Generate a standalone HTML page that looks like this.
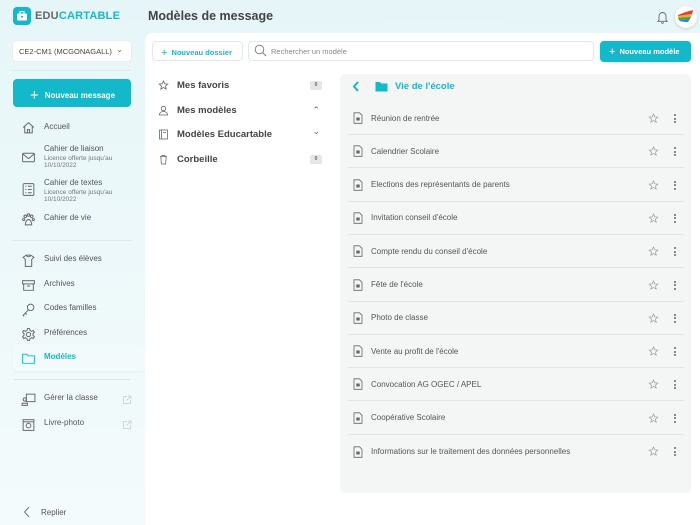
<!DOCTYPE html>
<html><head><meta charset="utf-8"><style>
*{margin:0;padding:0;box-sizing:border-box}
body{width:700px;height:525px;overflow:hidden;font-family:"Liberation Sans",sans-serif;background:linear-gradient(180deg,#e6f6f8 0%,#f4fbfc 100%);position:relative;color:#555}
.a{position:absolute}
.nav{position:absolute;left:21px;font-size:8px;color:#555;display:flex;align-items:flex-start}
.nav svg{width:15px;height:15px;margin-right:8px;flex:none}
.nav small{display:block;font-size:6.5px;color:#777;line-height:7px;margin-top:2px}
.row{position:absolute;left:348px;width:336px;height:33px;border-bottom:1px solid #e1e4e4;font-size:8px;color:#555;display:flex;align-items:center}
.row.last{border-bottom:none}
.row .ic{margin-left:5px;margin-right:8px}
.row .st{position:absolute;right:25px;top:11px}
.row .dt{position:absolute;right:8px;top:12px;width:2px}
.dt i{display:block;width:2px;height:2px;background:#666;border-radius:1px;margin-bottom:1.5px}
.cat{position:absolute;left:158px;font-size:9.5px;font-weight:bold;color:#444;display:flex;align-items:center;width:164px}
.cat svg{margin-right:8px}
.badge{position:absolute;right:0;width:12px;height:9px;background:#e6e6e6;border-radius:2px;font-size:5px;text-align:center;line-height:9px;color:#666}
</style></head><body>
<div class="a" style="left:13px;top:7px;width:18px;height:18px;background:#14b8cb;border-radius:4px"></div>
<svg class="a" style="left:16px;top:10px" width="12" height="12" viewBox="0 0 12 12"><rect x="1" y="3.5" width="10" height="7" rx="1" fill="#fff"/><rect x="4" y="1.5" width="4" height="2.5" fill="none" stroke="#fff" stroke-width="1"/><rect x="5" y="6" width="2" height="1.5" fill="#14b8cb"/></svg>
<div class="a" style="left:35px;top:10px;font-size:11px;font-weight:bold;letter-spacing:0.2px"><span style="color:#666">EDU</span><span style="color:#14b8cb">CARTABLE</span></div>
<div class="a" style="left:148px;top:9px;font-size:12.5px;font-weight:bold;color:#444">Modèles de message</div>
<svg class="a" style="left:656px;top:10px" width="13" height="14" viewBox="0 0 13 14"><path d="M3 10V6a3.5 3.5 0 0 1 7 0v4l1.2 1.3H1.8z M5.5 12.3a1 1 0 0 0 2 0" fill="none" stroke="#666" stroke-width="0.9"/></svg>
<div class="a" style="left:675px;top:6px;width:22px;height:22px;border-radius:50%;background:#fff;box-shadow:0 1px 3px rgba(0,0,0,.15);overflow:hidden">
<svg width="22" height="22" viewBox="0 0 22 22"><path d="M3 9 Q10 6 18 4 L17 8 Q10 9 3 10z" fill="#e53935"/><path d="M3 10 Q10 9 17 8 L16 11 Q10 11 3 12z" fill="#f9a825"/><path d="M3 12 Q10 11 16 11 L15 13 Q9 14 4 14z" fill="#43a047"/><path d="M4 14 Q9 14 15 13 L13 16 Q8 16 5 15z" fill="#1e88e5"/></svg></div>
<div class="a" style="left:13px;top:41px;width:118px;height:20px;background:#fff;border-radius:4px;box-shadow:0 0 0 1px #e6eeee;font-size:7.5px;color:#444;padding:6px 0 0 6px">CE2-CM1 (MCGONAGALL)<span style="position:absolute;right:8px;top:4px;font-size:8px;color:#666">&#8964;</span></div>
<div class="a" style="left:13px;top:70px;width:118px;height:1px;background:#dfe9ea"></div>
<div class="a" style="left:13px;top:79px;width:118px;height:28px;background:#14b8cb;border-radius:4px;color:#fff;font-size:8px;font-weight:bold;padding:8px 0 0 17px"><span style="font-size:15px;font-weight:normal;vertical-align:-2px;margin-right:6px">+</span>Nouveau message</div>
<div class="nav" style="top:120px"><svg viewBox="0 0 14 14" fill="none" stroke="#666" stroke-width="0.9"><path d="M2 7L7 2.5 12 7M3.5 6v6h7V6M6 12V9h2v3"/></svg><span style="margin-top:2px">Accueil</span></div>
<div class="nav" style="top:144px"><svg viewBox="0 0 14 14" fill="none" stroke="#666" stroke-width="0.9" style="margin-top:6px"><rect x="1.5" y="3" width="11" height="8" rx="1"/><path d="M1.5 3.5L7 8l5.5-4.5"/></svg><div>Cahier de liaison<small>Licence offerte jusqu'au<br>10/10/2022</small></div></div>
<div class="nav" style="top:178px"><svg viewBox="0 0 14 14" fill="none" stroke="#666" stroke-width="0.9" style="margin-top:4px"><rect x="2" y="1.5" width="10" height="11" rx="1"/><path d="M4 4h1M6.5 4h3.5M4 7h1M6.5 7h3.5M4 10h1M6.5 10h3.5"/></svg><div>Cahier de textes<small>Licence offerte jusqu'au<br>10/10/2022</small></div></div>
<div class="nav" style="top:212px"><svg viewBox="0 0 14 14" fill="none" stroke="#666" stroke-width="0.9"><circle cx="4" cy="4" r="1.2"/><circle cx="7" cy="2.8" r="1.2"/><circle cx="10" cy="4" r="1.2"/><circle cx="2.5" cy="7" r="1"/><circle cx="11.5" cy="7" r="1"/><path d="M4 12c0-3 1.5-5 3-5s3 2 3 5z"/></svg><span style="margin-top:1px">Cahier de vie</span></div>
<div class="a" style="left:13px;top:240px;width:118px;height:1px;background:#dfe9ea"></div>
<div class="nav" style="top:253px"><svg viewBox="0 0 14 14" fill="none" stroke="#666" stroke-width="0.9"><path d="M5 2h4l3 2-2 2v6.5H4V6L2 4z M5 2a2 1.5 0 0 0 4 0"/></svg><span style="margin-top:1px">Suivi des élèves</span></div>
<div class="nav" style="top:278px"><svg viewBox="0 0 14 14" fill="none" stroke="#666" stroke-width="0.9"><rect x="1.5" y="2.5" width="11" height="3"/><path d="M2.5 5.5v6h9v-6M5.5 7.5h3"/></svg><span style="margin-top:1px">Archives</span></div>
<div class="nav" style="top:302px"><svg viewBox="0 0 14 14" fill="none" stroke="#666" stroke-width="0.9"><circle cx="9" cy="5" r="3"/><path d="M7 7.2L2 12.5l1 1M4 10.5l1.5 1.2"/></svg><span style="margin-top:1px">Codes familles</span></div>
<div class="nav" style="top:327px"><svg viewBox="0 0 14 14" fill="none" stroke="#666" stroke-width="0.9"><circle cx="7" cy="7" r="2"/><path d="M6 1.5h2l.4 1.7 1.5.8 1.6-.7 1 1.7-1.3 1.2v1.6l1.3 1.2-1 1.7-1.6-.7-1.5.8L8 12.5H6l-.4-1.7-1.5-.8-1.6.7-1-1.7L2.8 7.8V6.2L1.5 5l1-1.7 1.6.7 1.5-.8z"/></svg><span style="margin-top:1px">Préférences</span></div>
<div class="a" style="left:13px;top:345px;width:132px;height:26px;background:#f2fafb;border-radius:4px;box-shadow:0 1px 2px rgba(0,0,0,.05)"></div>
<div class="nav" style="top:351px;color:#14b8cb;font-weight:bold"><svg viewBox="0 0 14 14" fill="none" stroke="#14b8cb" stroke-width="0.9"><path d="M1.5 3h4l1 1.5h6v7h-11z"/></svg><span style="margin-top:1px">Modèles</span></div>
<div class="a" style="left:13px;top:379px;width:118px;height:1px;background:#dfe9ea"></div>
<div class="nav" style="top:392px"><svg viewBox="0 0 14 14" fill="none" stroke="#666" stroke-width="0.9"><rect x="5" y="2" width="8" height="7"/><circle cx="3.5" cy="7" r="1.5"/><path d="M1 12.5v-2h5v2z"/></svg><span style="margin-top:1px">Gérer la classe</span></div>
<div class="nav" style="top:417px"><svg viewBox="0 0 14 14" fill="none" stroke="#666" stroke-width="0.9"><rect x="2" y="2.5" width="10" height="10"/><circle cx="7" cy="8" r="2.2"/><path d="M2 4.5h10"/></svg><span style="margin-top:1px">Livre-photo</span></div>
<svg class="a" style="left:122px;top:395px" width="10" height="10" viewBox="0 0 10 10" fill="none" stroke="#ccc" stroke-width="0.8"><path d="M5 1.5H1.5v7h7V5M6 1h3v3M9 1L4.5 5.5"/></svg>
<svg class="a" style="left:122px;top:420px" width="10" height="10" viewBox="0 0 10 10" fill="none" stroke="#ccc" stroke-width="0.8"><path d="M5 1.5H1.5v7h7V5M6 1h3v3M9 1L4.5 5.5"/></svg>
<svg class="a" style="left:23px;top:506px" width="8" height="12" viewBox="0 0 8 12" fill="none" stroke="#666" stroke-width="0.9"><path d="M6 1L1.5 6 6 11"/></svg>
<div class="a" style="left:41px;top:508px;font-size:8px;color:#555">Replier</div>
<div class="a" style="left:145px;top:33px;width:555px;height:492px;background:#fff;border-top-left-radius:8px"></div>
<div class="a" style="left:152px;top:41px;width:91px;height:20px;border:1px solid #e3e8e8;border-radius:4px;font-size:7.5px;font-weight:bold;color:#14b8cb;padding:5px 0 0 8px"><span style="font-size:11px;font-weight:normal;margin-right:4px;vertical-align:-1px">+</span>Nouveau dossier</div>
<div class="a" style="left:248px;top:41px;width:346px;height:20px;border:1px solid #e3e8e8;border-radius:4px;font-size:7.5px;color:#888;padding:5px 0 0 22px">Rechercher un modèle</div>
<svg class="a" style="left:254px;top:44px" width="13" height="13" viewBox="0 0 13 13" fill="none" stroke="#777" stroke-width="0.9"><circle cx="5.5" cy="5.5" r="4.3"/><path d="M8.7 8.7l3.3 3.3"/></svg>
<div class="a" style="left:600px;top:41px;width:91px;height:21px;background:#14b8cb;border-radius:4px;font-size:7.5px;font-weight:bold;color:#fff;padding:5px 0 0 9px;box-shadow:0 1px 2px rgba(0,0,0,.1)"><span style="font-size:11px;font-weight:normal;margin-right:4px;vertical-align:-1px">+</span>Nouveau modèle</div>
<div class="cat" style="top:80px"><svg width="11" height="11" viewBox="0 0 11 11" fill="none" stroke="#666" stroke-width="0.8"><path d="M5.5 1l1.3 2.8 3 .3-2.3 2 .7 3-2.7-1.6-2.7 1.6.7-3-2.3-2 3-.3z"/></svg>Mes favoris<span class="badge">0</span></div>
<div class="cat" style="top:105px"><svg width="11" height="11" viewBox="0 0 11 11" fill="none" stroke="#666" stroke-width="0.8"><circle cx="5.5" cy="3.5" r="2.2"/><path d="M1.5 10c0-2.5 2-3.5 4-3.5s4 1 4 3.5z"/></svg>Mes modèles<span class="a" style="right:2px;top:0;font-size:9px;color:#666;font-weight:normal">&#8963;</span></div>
<div class="cat" style="top:129px"><svg width="11" height="11" viewBox="0 0 11 11" fill="none" stroke="#666" stroke-width="0.8"><rect x="1.5" y="1" width="8" height="9"/><path d="M3.5 1v9M5 3.5h3"/></svg>Modèles Educartable<span class="a" style="right:2px;top:-3px;font-size:9px;color:#666;font-weight:normal">&#8964;</span></div>
<div class="cat" style="top:154px"><svg width="11" height="11" viewBox="0 0 11 11" fill="none" stroke="#666" stroke-width="0.8"><path d="M2 2.5h7M4 2.5V1.5h3v1M2.8 2.5l.6 7.5h4.2l.6-7.5"/></svg>Corbeille<span class="badge">0</span></div>
<div class="a" style="left:340px;top:74px;width:351px;height:419px;background:#f4f6f6;border-radius:5px"></div>
<svg class="a" style="left:351px;top:80px" width="10" height="13" viewBox="0 0 10 13" fill="none" stroke="#14b8cb" stroke-width="2"><path d="M7 2L3 6.5 7 11"/></svg>
<svg class="a" style="left:375px;top:81px" width="13" height="11" viewBox="0 0 13 11"><path d="M0.5 1h4.5l1.2 1.5H12.5v8H0.5z" fill="#14b8cb"/></svg>
<div class="a" style="left:395px;top:81px;font-size:9.5px;font-weight:bold;color:#14b8cb">Vie de l'école</div>
<div id="rows"></div>
<script>
var t=["Réunion de rentrée","Calendrier Scolaire","Elections des représentants de parents","Invitation conseil d'école","Compte rendu du conseil d'école","Fête de l'école","Photo de classe","Vente au profit de l'école","Convocation AG OGEC / APEL","Coopérative Scolaire","Informations sur le traitement des données personnelles"];
var h="";
for(var i=0;i<t.length;i++){var y=102+i*33.3;
h+='<div class="row'+(i==t.length-1?' last':'')+'" style="top:'+y+'px"><svg class="ic" width="10" height="12" viewBox="0 0 10 12" fill="none" stroke="#666" stroke-width="0.8"><path d="M1 0.8h5.5l2.5 2.5v8H1z"/><rect x="3.3" y="5.5" width="3.4" height="3" fill="#666" stroke="none"/></svg>'+t[i]+'<svg class="st" width="11" height="11" viewBox="0 0 11 11" fill="none" stroke="#999" stroke-width="0.7"><path d="M5.5 1l1.3 2.8 3 .3-2.3 2 .7 3-2.7-1.6-2.7 1.6.7-3-2.3-2 3-.3z"/></svg><span class="dt"><i></i><i></i><i></i></span></div>';}
document.getElementById("rows").innerHTML=h;
</script>
</body></html>
